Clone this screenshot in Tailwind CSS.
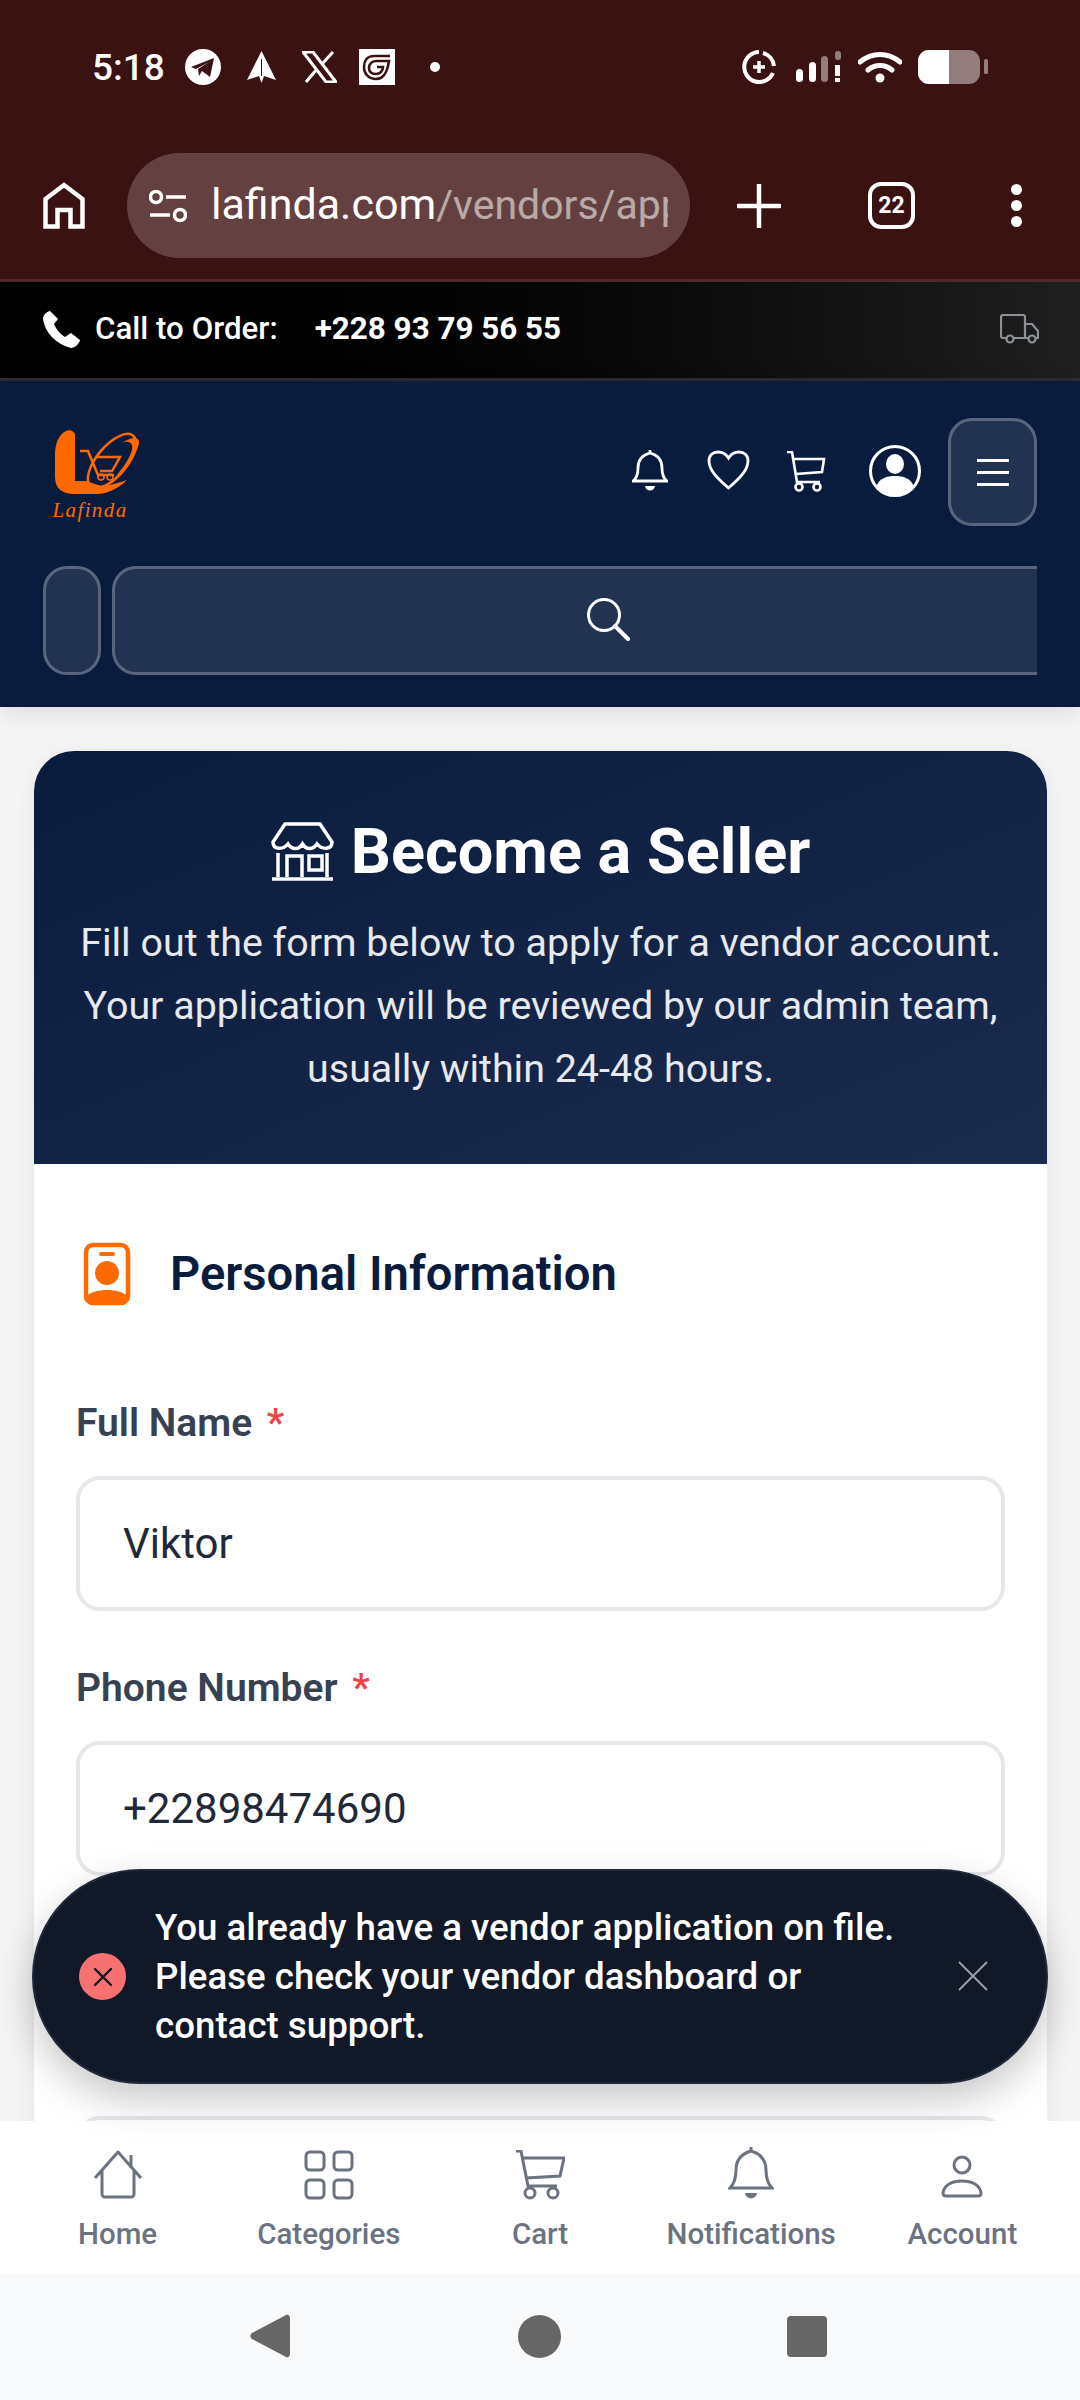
<!DOCTYPE html>
<html lang="en">
  <head>
    <meta charset="UTF-8" />
    <meta name="viewport" content="width=device-width, initial-scale=1.0" />
    <script src="https://cdn.jsdelivr.net/npm/@tailwindcss/browser@4"></script>
    <title>Become a Seller</title>
  </head>
  <body class="[font-family:Roboto,sans-serif]">
    <div class="relative w-[1080px] h-[2400px] overflow-hidden flex flex-col bg-[#f5f5f5]">
      <!-- status bar + browser toolbar -->
      <div class="h-[282px] shrink-0 bg-[#3a1212] border-b-[3px] border-[#4f2a2a] text-white">
        <div class="h-[134px] flex items-center pl-[92px] pr-[92px]">
          <span class="text-[37px] font-medium w-[93px] leading-none">5:18</span>
          <svg class="w-[36px] h-[36px]" viewBox="0 0 36 36"><circle cx="18" cy="18" r="18" fill="#fff"/><path d="M6 18 29 9 25 28 17 22 14 27 13 20 24 13 11 20Z" fill="#3a1212"/></svg>
          <svg class="w-[29px] h-[32px] ml-[26px]" viewBox="0 0 29 32"><path d="M14.500 0 29 29 17 25 14.500 32 12 25 0 29Z" fill="#fff"/><path d="M14.500 8V25" stroke="#3a1212" stroke-width="1"/></svg>
          <svg class="w-[35px] h-[32px] ml-[26px]" viewBox="0 0 35 32"><path d="M1 1H11L34 31H24ZM31 1 20 13M4 31 15 18" fill="none" stroke="#fff" stroke-width="3"/></svg>
          <svg class="w-[36px] h-[36px] ml-[22px]" viewBox="0 0 36 36"><rect width="36" height="36" fill="#fff"/><path d="M31 7H15C8 7 5 12 5 18C5 25 10 30 17 30C24 30 28 25 30 12H18C13 12 10 15 10 19C10 23 13 25 17 25C21 25 24 22 24 18H18" fill="none" stroke="#3a1212" stroke-width="2.600"/></svg>
          <span class="w-[10px] h-[10px] rounded-full bg-white ml-[35px]"></span>
          <div class="flex-1"></div>
          <svg class="w-[34px] h-[34px]" viewBox="0 0 34 34"><path d="M17 2A15 15 0 1 0 31 23" fill="none" stroke="#fff" stroke-width="4"/><path d="M21 3A15 15 0 0 1 32 16" fill="none" stroke="#fff" stroke-width="4"/><path d="M17 11V23M11 17H23" stroke="#fff" stroke-width="3.500"/></svg>
          <svg class="w-[46px] h-[32px] ml-[20px]" viewBox="0 0 46 32"><rect x="0" y="18" width="7" height="13" rx="3.500" fill="#fff"/><rect x="13" y="11" width="7" height="20" rx="3.500" fill="#fff"/><rect x="25" y="5" width="7" height="26" rx="3.500" fill="#fff" fill-opacity=".45"/><rect x="39" y="0" width="6" height="9" rx="3" fill="#fff" fill-opacity=".45"/><rect x="39" y="14" width="5" height="11" fill="#fff"/><rect x="39" y="27" width="5" height="4" fill="#fff"/></svg>
          <svg class="w-[44px] h-[32px] ml-[16px]" viewBox="0 0 44 32"><path d="M2 11C14 1 30 1 42 11M10 19C17 13 27 13 34 19" fill="none" stroke="#fff" stroke-width="5" stroke-linecap="round"/><circle cx="22" cy="27" r="4.500" fill="#fff"/></svg>
          <svg class="w-[70px] h-[34px] ml-[16px]" viewBox="0 0 70 34"><rect width="62" height="34" rx="11" fill="#fff" fill-opacity=".45"/><path d="M11 0H31V34H11A11 11 0 0 1 0 23V11A11 11 0 0 1 11 0Z" fill="#fff"/><rect x="66" y="9" width="4" height="15" rx="1.500" fill="#fff" fill-opacity=".45"/></svg>
        </div>
        <div class="h-[105px] mt-[19px] flex items-center pl-[43px]">
          <svg class="w-[42px] h-[47px]" viewBox="0 0 42 47"><path d="M2.500 44.500V17L21 3 39.500 17V44.500H27.500V28H14.500V44.500Z" fill="none" stroke="#fff" stroke-width="4.500"/></svg>
          <div class="ml-[42px] w-[563px] h-[105px] rounded-full bg-[#644140] flex items-center pl-[22px] pr-[22px]">
            <svg class="w-[38px] h-[34px] shrink-0" viewBox="0 0 38 34"><circle cx="7" cy="8" r="5.500" fill="none" stroke="#fff" stroke-width="3.500"/><path d="M17 8H37M1 26H21" stroke="#fff" stroke-width="3.500"/><circle cx="31" cy="26" r="5.500" fill="none" stroke="#fff" stroke-width="3.500"/></svg>
            <div class="ml-[24px] overflow-hidden whitespace-nowrap text-[43px] leading-[56px] pb-[3px]">lafinda.com<span class="text-[41px] text-white/55">/vendors/application</span></div>
          </div>
          <svg class="w-[44px] h-[44px] ml-[47px]" viewBox="0 0 44 44"><path d="M22 1V43M1 22H43" stroke="#fff" stroke-width="4.500" stroke-linecap="round"/></svg>
          <div class="ml-[87px] w-[47px] h-[47px] rounded-[13px] border-[4.500px] border-white flex items-center justify-center text-[23px] font-bold leading-none">22</div>
          <div class="ml-[96px] flex flex-col gap-[5px]">
            <span class="w-[11px] h-[11px] rounded-full bg-white"></span>
            <span class="w-[11px] h-[11px] rounded-full bg-white"></span>
            <span class="w-[11px] h-[11px] rounded-full bg-white"></span>
          </div>
        </div>
      </div>

      <!-- call to order strip -->
      <div class="h-[99px] shrink-0 bg-gradient-to-r from-[#000000] to-[#1f1f1f] border-b-[3px] border-[#2a2c2e] flex items-center pl-[43px] pr-[41px] pb-[2px] text-white">
        <svg class="w-[37px] h-[37px]" viewBox="0 0 37 37"><path d="M7 0C3 1 0 4 0 8C2 22 13 33 28 37C32 37 36 33 37 29L28 22L22 26C17 23 13 18 11 13L15 8Z" fill="#fff"/></svg>
        <span class="ml-[15px] text-[31.300px] font-medium">Call to Order:</span>
        <span class="ml-[37px] text-[31.400px] font-bold">+228 93 79 56 55</span>
        <div class="flex-1"></div>
        <svg class="w-[39px] h-[30px]" viewBox="0 0 39 30" fill="none" stroke="#8b9099" stroke-width="2.200"><path d="M7 24H3A2 2 0 0 1 1 22V3A2 2 0 0 1 3 1H23A2 2 0 0 1 25 3V24H13M25 10H32L38 17V24H35M29 24H25"/><circle cx="10" cy="25" r="3.500"/><circle cx="32" cy="25" r="3.500"/></svg>
      </div>

      <!-- site header -->
      <div class="relative z-10 h-[326px] shrink-0 bg-[#0a1c3e] shadow-[0_6px_24px_rgba(0,0,0,0.1)] px-[43px]">
        <div class="h-[184px] flex items-center">
          <div class="w-[120px] -ml-[13px] -mt-[12px] shrink-0 flex flex-col items-center">
            <svg class="w-[120px] h-[90px]" viewBox="0 0 120 90"><path d="M36 18C28 22 25 32 25 42V64C25 76 33 81 44 81H68C80 80 90 74 97 67C88 70 76 74 68 72L56 68H45V22C45 19 40 16 36 18Z" fill="#ff6a00"/><ellipse cx="82" cy="48" rx="33" ry="15" transform="rotate(-50 82 48)" fill="none" stroke="#ff6a00" stroke-width="2.500"/><path d="M92 30C104 22 112 24 108 34C105 44 96 56 85 64C96 52 104 38 102 32C100 28 96 28 92 30Z" fill="#ff6a00"/><path d="M50 38H58L68 62H84M66 44H90L82 58H70" fill="none" stroke="#ff6a00" stroke-width="2.500"/><circle cx="71" cy="64" r="3" fill="none" stroke="#ff6a00" stroke-width="1.500"/><circle cx="80" cy="64" r="3" fill="none" stroke="#ff6a00" stroke-width="1.500"/></svg>
            <span class="-mt-[3px] text-[21px] leading-none italic text-[#ff6a00] tracking-[1.400px] [font-family:'Liberation_Serif',serif]">Lafinda</span>
          </div>
          <div class="flex-1"></div>
          <svg class="w-[36px] h-[43px] -mt-[4px]" viewBox="0 0 36 43" fill="none" stroke="#fff" stroke-width="2.800"><path d="M1 31H35C31 28 30 24 30 18C30 10 26 5 18 3C10 5 6 10 6 18C6 24 5 28 1 31ZM18 0V3"/><path d="M13 36H23C22 42 14 42 13 36Z" fill="#fff" stroke="none"/></svg>
          <svg class="w-[43px] h-[40px] ml-[39px] -mt-[6px]" viewBox="0 0 43 40" fill="none" stroke="#fff" stroke-width="2.800"><path d="M21.500 38C10 28 2 20 2 11C2 5 6 2 11 2C15 2 19 4 21.500 8C24 4 28 2 32 2C37 2 41 5 41 11C41 20 33 28 21.500 38Z"/></svg>
          <svg class="w-[40px] h-[41px] ml-[36px] -mt-[4px]" viewBox="0 0 40 41" fill="none" stroke="#fff" stroke-width="2.600"><path d="M1 1H6L11 31H34M8 8H38L36 21L10 23"/><circle cx="13" cy="36" r="3.500"/><circle cx="31" cy="36" r="3.500"/></svg>
          <svg class="w-[52px] h-[54px] ml-[43px] -mt-[4px]" viewBox="0 0 52 54"><circle cx="26" cy="27" r="24.500" fill="none" stroke="#fff" stroke-width="3"/><ellipse cx="26" cy="20" rx="9" ry="10" fill="#fff"/><path d="M7 43C10 34 18 32 26 32C34 32 42 34 45 43C40 49 33 52 26 52C19 52 12 49 7 43Z" fill="#fff"/></svg>
          <button class="ml-[27px] w-[89px] h-[108px] -mt-[2px] rounded-[24px] bg-white/10 border-[3px] border-white/25 flex flex-col items-center justify-center gap-[9px]">
            <span class="w-[32px] h-[3px] bg-white"></span>
            <span class="w-[32px] h-[3px] bg-white"></span>
            <span class="w-[32px] h-[3px] bg-white"></span>
          </button>
        </div>
        <div class="flex gap-[11px] mt-[1px]">
          <div class="w-[58px] h-[109px] rounded-[24px] bg-white/10 border-[3px] border-white/25"></div>
          <div class="flex-1 h-[109px] rounded-l-[24px] bg-white/10 border-[3px] border-r-0 border-white/25 flex items-center justify-center">
            <svg class="w-[44px] h-[44px] ml-[64px] -mt-[3px]" viewBox="0 0 44 44" fill="none" stroke="#fff" stroke-width="3"><circle cx="18" cy="18" r="15.500"/><path d="M29 29 42 42" stroke-linecap="round" stroke-width="4"/></svg>
          </div>
        </div>
      </div>

      <!-- page -->
      <div class="flex-1 min-h-0 overflow-hidden pt-[44px] pl-[34px] pr-[33px]">
        <div class="rounded-t-[40px] bg-white shadow-[0_4px_24px_rgba(0,0,0,0.07)] h-[1400px]">
          <div class="h-[413px] rounded-t-[40px] bg-gradient-to-br from-[#0a1c3e] to-[#1a2b4d] text-center text-white pt-[65px]">
            <div class="flex items-center justify-center h-[70px]">
              <svg class="w-[63px] h-[60px] mt-[2px]" viewBox="0 0 63 60" fill="none" stroke="#fff" stroke-width="3.500"><path d="M14 2H49L61 20C61 28 51 28 46 22C42 28 35 28 31.500 22C28 28 21 28 17 22C12 28 2 28 2 20Z"/><path d="M7 31V55M56 31V55M1 57H62"/><path d="M16 55V34H31V55"/><rect x="38" y="34" width="13" height="14"/></svg>
              <h1 class="ml-[17px] text-[63px] font-bold leading-none">Become a Seller</h1>
            </div>
            <p class="mt-[25px] text-[39.400px] leading-[63px] text-white/90">Fill out the form below to apply for a vendor account.<br />Your application will be reviewed by our admin team,<br />usually within 24-48 hours.</p>
          </div>
          <div class="px-[42px] pt-[79px]">
            <div class="flex items-center h-[64px]">
              <svg class="w-[48px] h-[64px] ml-[7px] -mt-[3px]" viewBox="0 0 48 64"><path d="M10 3H38A7 7 0 0 1 45 10V54A7 7 0 0 1 38 61H10A7 7 0 0 1 3 54V10A7 7 0 0 1 10 3Z" fill="none" stroke="#ff6a00" stroke-width="4.500"/><rect x="16" y="10" width="16" height="4" rx="2" fill="#ff6a00"/><circle cx="24" cy="31" r="12" fill="#ff6a00"/><path d="M3 54C8 50 16 48 24 48C32 48 40 50 45 54V56A5 5 0 0 1 40 61H8A5 5 0 0 1 3 56Z" fill="#ff6a00"/></svg>
              <h2 class="ml-[39px] text-[47.200px] font-semibold text-[#0a1c3e] leading-none">Personal Information</h2>
            </div>
            <label class="block mt-[91px] text-[39px] font-semibold text-[#374151] leading-[50px]">Full Name <span class="ml-[5px] text-[#ef4444]">*</span></label>
            <input value="Viktor" class="block mt-[28px] w-full h-[135px] rounded-[24px] border-[4px] border-[#e5e7eb] px-[43px] text-[42px] text-[#1f2937] bg-white" />
            <label class="block mt-[52px] text-[39px] font-semibold text-[#374151] leading-[50px]">Phone Number <span class="ml-[5px] text-[#ef4444]">*</span></label>
            <input value="+22898474690" class="block mt-[28px] w-full h-[135px] rounded-[24px] border-[4px] border-[#e5e7eb] px-[43px] text-[42px] text-[#1f2937] bg-white" />
            <div class="mt-[240px] w-full h-[135px] rounded-[24px] border-[4px] border-[#e5e7eb]"></div>
          </div>
        </div>
      </div>

      <!-- bottom nav -->
      <div class="relative z-10 h-[153px] shrink-0 bg-white grid grid-cols-5 px-[12px] pt-[29px] text-[29.500px] font-medium text-[#6b7280] text-center leading-none">
        <div class="flex flex-col items-center">
          <svg class="w-[50px] h-[50px]" viewBox="0 0 50 50" fill="none" stroke="#6b7280" stroke-width="3"><path d="M2 28 25 2 48 28M9 21V44A3 3 0 0 0 12 47H38A3 3 0 0 0 41 44V21M38 5V18" stroke-linejoin="round"/></svg>
          <span class="mt-[20px]">Home</span>
        </div>
        <div class="flex flex-col items-center">
          <svg class="w-[50px] h-[50px]" viewBox="0 0 50 50" fill="none" stroke="#6b7280" stroke-width="3"><rect x="2" y="2" width="18" height="18" rx="4"/><rect x="30" y="2" width="18" height="18" rx="4"/><rect x="2" y="30" width="18" height="18" rx="4"/><rect x="30" y="30" width="18" height="18" rx="4"/></svg>
          <span class="mt-[20px]">Categories</span>
        </div>
        <div class="flex flex-col items-center">
          <svg class="w-[50px] h-[50px]" viewBox="0 0 50 50" fill="none" stroke="#6b7280" stroke-width="3"><path d="M1 1H6L13 36H42M7 8H49L45 26L11 28"/><circle cx="15" cy="43" r="5"/><circle cx="38" cy="43" r="5"/></svg>
          <span class="mt-[20px]">Cart</span>
        </div>
        <div class="flex flex-col items-center">
          <svg class="w-[46px] h-[54px] -mt-[4px]" viewBox="0 0 46 54" fill="none" stroke="#6b7280" stroke-width="3"><path d="M2 42H44C40 38 38 32 38 24C38 14 33 8 23 5C13 8 8 14 8 24C8 32 6 38 2 42ZM23 1V5"/><path d="M17 47H29C28 54 18 54 17 47Z" fill="#6b7280" stroke="none"/></svg>
          <span class="mt-[20px]">Notifications</span>
        </div>
        <div class="flex flex-col items-center">
          <svg class="w-[42px] h-[50px]" viewBox="0 0 42 50" fill="none" stroke="#6b7280" stroke-width="3"><circle cx="21" cy="15" r="8"/><path d="M2 43C3 35 11 31 21 31C31 31 39 35 40 43C40 45 39 46 37 46H5C3 46 2 45 2 43Z"/></svg>
          <span class="mt-[20px]">Account</span>
        </div>
      </div>

      <!-- android nav -->
      <div class="h-[126px] shrink-0 bg-[#f8f9fa] flex items-center pl-[250px] pb-[2px]">
        <svg class="w-[40px] h-[44px]" viewBox="0 0 40 44"><path d="M36 1C38 0 40 2 40 4V40C40 42 38 44 36 43L2 25C0 24 0 20 2 19Z" fill="#666"/></svg>
        <span class="ml-[228px] w-[43px] h-[43px] rounded-full bg-[#666]"></span>
        <span class="ml-[226px] w-[40px] h-[41px] rounded-[4px] bg-[#666]"></span>
      </div>

      <!-- toast -->
      <div class="absolute z-20 left-[32px] top-[1869px] w-[1016px] h-[215px] rounded-[108px] bg-[#111827] border-[2px] border-[#1f2a3d] shadow-[0_16px_40px_rgba(0,0,0,0.22)] flex items-center pl-[45px] text-white">
        <div class="w-[47px] h-[47px] rounded-full bg-[#f87171] flex items-center justify-center shrink-0">
          <svg class="w-[24px] h-[24px]" viewBox="0 0 24 24" fill="none" stroke="#111827" stroke-width="2.400" stroke-linecap="round"><path d="M4 4 20 20M20 4 4 20"/></svg>
        </div>
        <p class="ml-[29px] w-[750px] text-[36.700px] font-medium leading-[49px]">You already have a vendor application on file. Please check your vendor dashboard or contact support.</p>
        <svg class="w-[30px] h-[30px] ml-[53px] -mt-[2px]" viewBox="0 0 30 30" fill="none" stroke="#9ca3af" stroke-width="1.800"><path d="M1 1 29 29M29 1 1 29"/></svg>
      </div>
    </div>
  </body>
</html>
